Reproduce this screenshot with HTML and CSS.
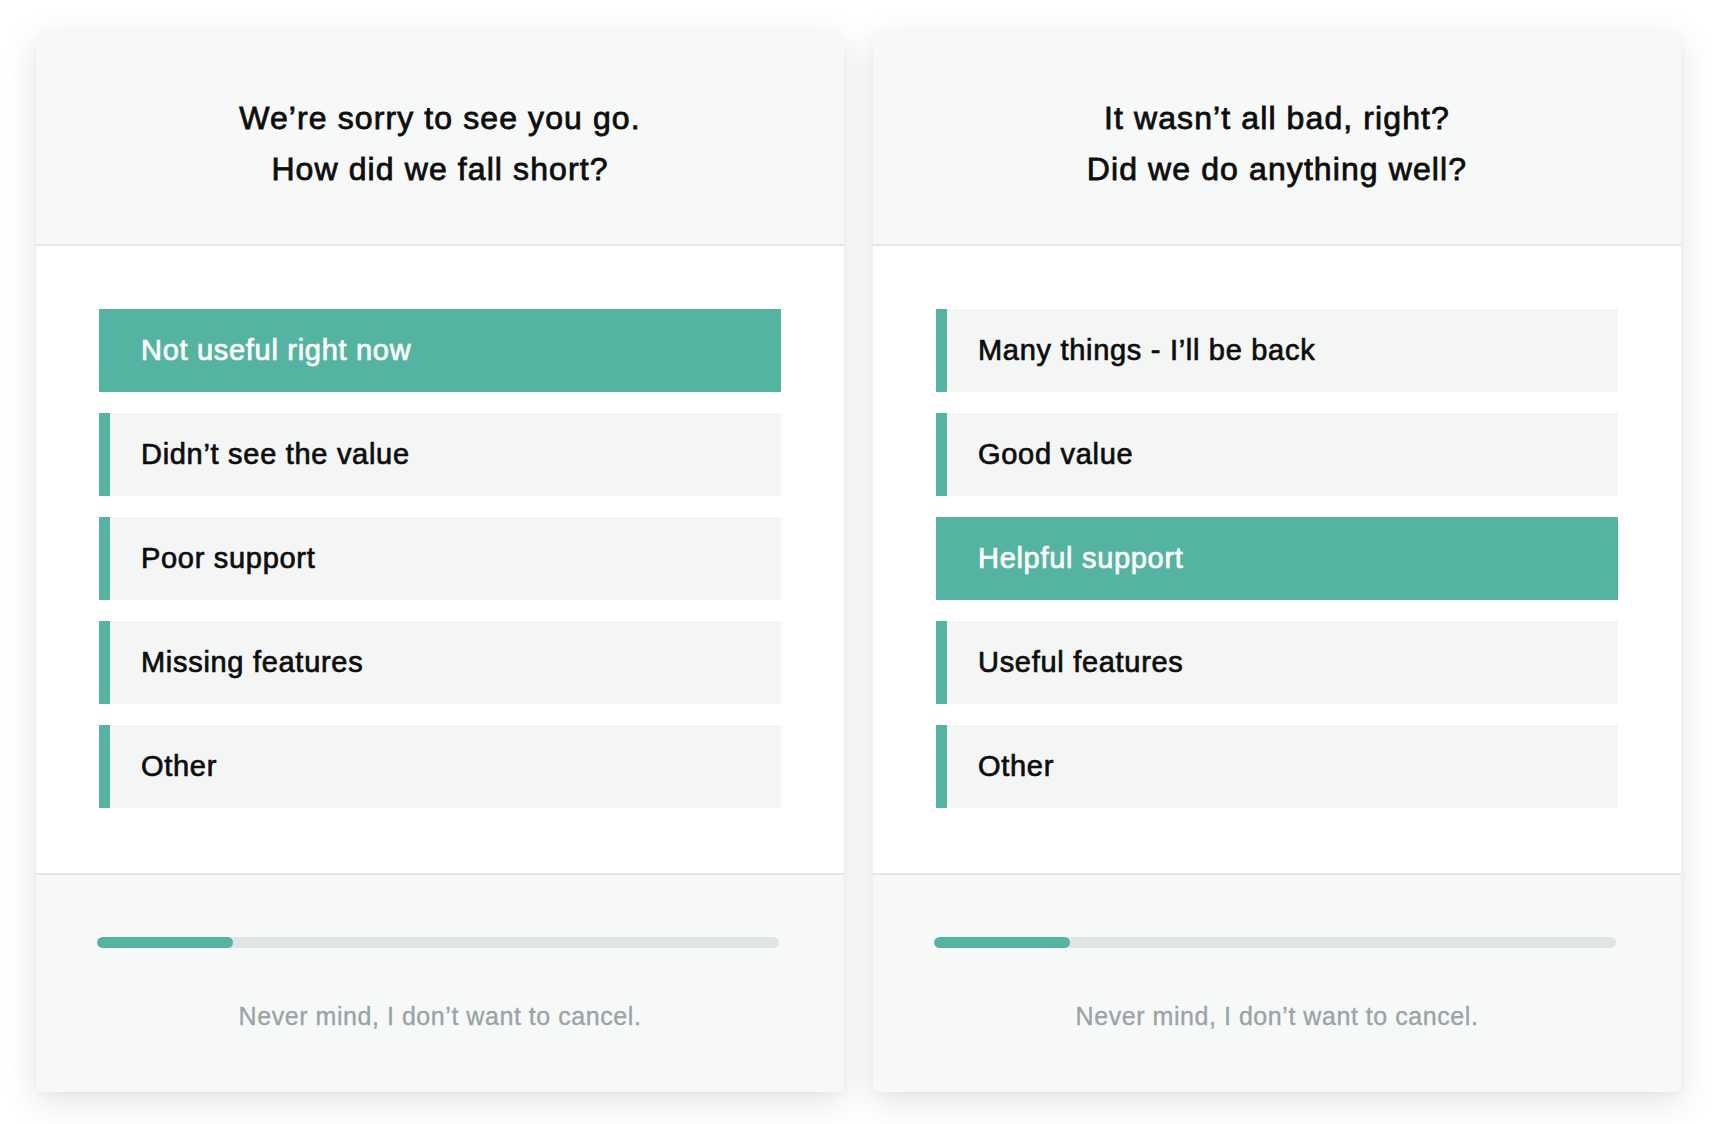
FILE: index.html
```html
<!DOCTYPE html>
<html lang="en">
<head>
<meta charset="utf-8">
<title>Cancel survey</title>
<link rel="stylesheet" href="styles.css">
</head>
<body>
<main class="page">
  <section class="card">
    <header class="card-head">
      <h2 class="title">We’re sorry to see you go.<br>How did we fall short?</h2>
    </header>
    <div class="card-body">
      <ul class="options">
        <li class="option is-selected">Not useful right now</li>
        <li class="option">Didn’t see the value</li>
        <li class="option">Poor support</li>
        <li class="option">Missing features</li>
        <li class="option">Other</li>
      </ul>
    </div>
    <footer class="card-foot">
      <div class="progress"><div class="progress-fill" style="width: 20%"></div></div>
      <a class="cancel-link">Never mind, I don’t want to cancel.</a>
    </footer>
  </section>
  <section class="card">
    <header class="card-head">
      <h2 class="title">It wasn’t all bad, right?<br>Did we do anything well?</h2>
    </header>
    <div class="card-body">
      <ul class="options">
        <li class="option">Many things - I’ll be back</li>
        <li class="option">Good value</li>
        <li class="option is-selected">Helpful support</li>
        <li class="option">Useful features</li>
        <li class="option">Other</li>
      </ul>
    </div>
    <footer class="card-foot">
      <div class="progress"><div class="progress-fill" style="width: 20%"></div></div>
      <a class="cancel-link">Never mind, I don’t want to cancel.</a>
    </footer>
  </section>
</main>
</body>
</html>
```
FILE: styles.css
```css
* { box-sizing: border-box; }
html, body {
  margin: 0;
  padding: 0;
  background: #ffffff;
}
body {
  font-family: "Liberation Sans", Arial, Helvetica, sans-serif;
  color: #111111;
}
.page {
  display: flex;
  gap: 29px;
  padding: 31px 37px 0 36px;
  height: 1124px;
  align-items: flex-start;
}
.card {
  flex: 1 1 0;
  border-radius: 7px;
  background: #ffffff;
  box-shadow: 0 10px 36px rgba(0, 0, 0, 0.11), 0 2px 6px rgba(0, 0, 0, 0.03);
  overflow: hidden;
  display: flex;
  flex-direction: column;
}
.card-head {
  background: #f7f9f9;
  height: 215px;
  border-bottom: 2px solid #dfe7e8;
  padding-top: 62px;
  text-align: center;
}
.title {
  margin: 0;
  font-size: 32px;
  line-height: 51px;
  font-weight: 400;
  letter-spacing: 1.1px;
  -webkit-text-stroke: 0.8px currentColor;
  color: #0d0d0d;
}
.card-body {
  padding: 63px 63px 65px;
  background: #ffffff;
}
.options {
  list-style: none;
  margin: 0;
  padding: 0;
  display: flex;
  flex-direction: column;
  gap: 21px;
}
.option {
  height: 83px;
  display: flex;
  align-items: center;
  background: #f4f6f6;
  border-left: 11px solid #55b3a1;
  padding-left: 31px;
  font-size: 29px;
  letter-spacing: 0.7px;
  -webkit-text-stroke: 0.7px currentColor;
  color: #0d0d0d;
}
.option.is-selected {
  background: #55b3a1;
  color: #ffffff;
}
.card-foot {
  background: #f7f9f9;
  border-top: 2px solid #dfe7e8;
  height: 219px;
  padding-top: 62px;
  display: flex;
  flex-direction: column;
  align-items: stretch;
}
.progress {
  height: 11px;
  margin: 0 65px 0 61px;
  border-radius: 6px;
  background: #dfe5e7;
  overflow: hidden;
}
.progress-fill {
  height: 100%;
  border-radius: 6px;
  background: #55b3a1;
}
.cancel-link {
  margin-top: 53px;
  text-align: center;
  font-size: 25px;
  line-height: 30px;
  letter-spacing: 0.55px;
  -webkit-text-stroke: 0.35px currentColor;
  color: #9aa4a7;
}
```
